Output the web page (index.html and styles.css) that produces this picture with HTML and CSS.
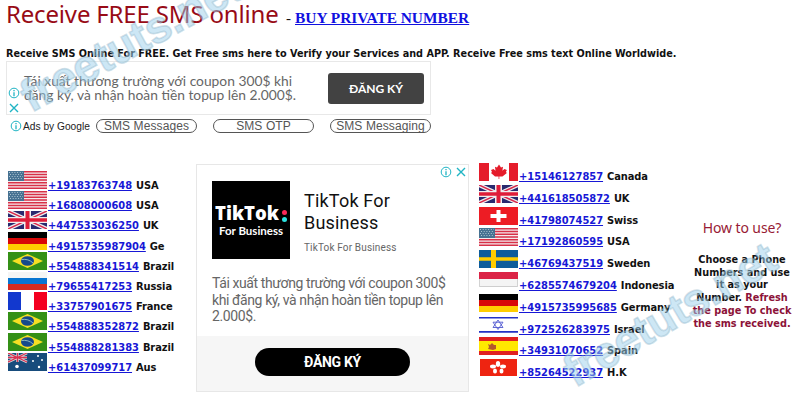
FILE: index.html
```html
<!DOCTYPE html>
<html lang="en">
<head>
<meta charset="utf-8">
<title>Receive FREE SMS online</title>
<link rel="stylesheet" href="styles.css">
</head>
<body>
<svg class="defs" width="0" height="0" aria-hidden="true">
  <defs>
    <symbol id="us" viewBox="0 0 39 18" preserveAspectRatio="none"><path fill="#f5eaec" d="M0 0h39v18H0z"/><path stroke="#d83048" stroke-width="1.5" d="M0 .7h39M0 3.5h39M0 6.3h39M0 9h39M0 11.8h39M0 14.5h39M0 17.3h39"/><path fill="#467292" d="M0 0h16v10H0z"/><path stroke="#b9ced9" stroke-width=".9" stroke-dasharray="1 1.7" d="M1 1.5h14M2 3.5h13M1 5.5h14M2 7.5h13"/></symbol>
    <symbol id="uk" viewBox="0 0 39 18" preserveAspectRatio="none"><path fill="#29296f" d="M0 0h39v18H0z"/><path stroke="#eee" stroke-width="4" d="M0 0l39 18M39 0L0 18"/><path stroke="#d9264a" stroke-width="1.5" d="M0 0l39 18M39 0L0 18"/><path stroke="#eee" stroke-width="7" d="M19.500 0v18"/><path stroke="#eee" stroke-width="6" d="M0 9h39"/><path stroke="#df1c38" stroke-width="4" d="M19.500 0v18"/><path stroke="#df1c38" stroke-width="3.500" d="M0 9h39"/></symbol>
    <symbol id="de" viewBox="0 0 39 18" preserveAspectRatio="none"><path d="M0 0h39v6H0z"/><path fill="#d80808" d="M0 6h39v6H0z"/><path fill="#ffce00" d="M0 12h39v6H0z"/></symbol>
    <symbol id="br" viewBox="0 0 39 18" preserveAspectRatio="none"><path fill="#349016" d="M0 0h39v18H0z"/><path fill="#f6df24" d="M4 9L19.500 2 35 9l-15.500 7z"/><ellipse cx="19.500" cy="9" rx="6.500" ry="4.800" fill="#164a8b"/><path d="M13.500 7.500q7-1 11.500 3.500" fill="none" stroke="#8eb9bd"/></symbol>
    <symbol id="ru" viewBox="0 0 39 18" preserveAspectRatio="none"><path fill="#f5f5f5" d="M0 0h39v6H0z"/><path fill="#0875d1" d="M0 6h39v6H0z"/><path fill="#d52b1e" d="M0 12h39v6H0z"/></symbol>
    <symbol id="fr" viewBox="0 0 39 18" preserveAspectRatio="none"><path fill="#fff" d="M0 0h39v18H0z"/><path fill="#1238ce" d="M0 0h13v18H0z"/><path fill="#f40020" d="M26 0h13v18H26z"/></symbol>
    <symbol id="au" viewBox="0 0 39 18" preserveAspectRatio="none"><path fill="#174c7c" d="M0 0h39v18H0z"/><path stroke="#ddd" stroke-width="2.500" d="M0 0l19 9M19 0L0 9M9.500 0v9M0 4.500h19"/><path stroke="#d93353" stroke-width="1.300" d="M0 0l19 9M19 0L0 9M9.500 0v9M0 4.500h19"/><g fill="#fff"><circle cx="9" cy="13.500" r="1.800"/><circle cx="30" cy="3" r="1"/><circle cx="25" cy="8" r="1"/><circle cx="34" cy="7" r="1"/><circle cx="31" cy="14" r="1.200"/></g></symbol>
    <symbol id="ca" viewBox="0 0 39 18" preserveAspectRatio="none"><path fill="#fff" d="M0 0h39v18H0z"/><path fill="#e51c2b" d="M0 0h10v18H0zM30 0h9v18h-9zM20 1.500l2 3 2-.8-.6 4 2-1.600 2.500.900-1 2 1 1-4.500 3.500H20.300V16h-.7v-2.500H16L12 10l1-1-1-2 2.500-.900 2 1.600-.5-4 2 .8z"/></symbol>
    <symbol id="ch" viewBox="0 0 39 18" preserveAspectRatio="none"><path fill="#ed1c24" d="M0 0h39v18H0z"/><path fill="#fff" d="M17.500 3h4v4h6v4h-6v4h-4v-4h-6V7h6z"/></symbol>
    <symbol id="se" viewBox="0 0 39 18" preserveAspectRatio="none"><path fill="#0e5c9b" d="M0 0h39v18H0z"/><path fill="#fc0" d="M12 0h5v18h-5zM0 7.200h39v3.600H0z"/></symbol>
    <symbol id="id" viewBox="0 0 39 18" preserveAspectRatio="none"><path fill="#f4f4f4" stroke="#bbb" stroke-width=".7" d="M.4 0h38.200v14.500H.4z"/><path fill="#db2346" d="M0 0h39v7H0z"/></symbol>
    <symbol id="il" viewBox="0 0 39 18" preserveAspectRatio="none"><path fill="#fff" d="M0 0h39v18H0z"/><path fill="#2332c5" d="M0 1h39v1.600H0zM0 15h39v1.700H0z"/><path fill="none" stroke="#5058d0" stroke-width=".9" d="M19 4l5 7.500H14zM19 13.500L14 6.200h10z"/></symbol>
    <symbol id="es" viewBox="0 0 39 18" preserveAspectRatio="none"><path fill="#e02020" d="M0 0h39v18H0z"/><path fill="#ffe800" d="M0 4h39v10H0z"/><path fill="#b3582c" d="M9 7l2 1 2-2 2 2 2 0v4l-3 1-5-1 1-2z"/></symbol>
    <symbol id="hk" viewBox="0 0 39 18" preserveAspectRatio="none"><path fill="#ee2411" d="M1 0h37v17H1z"/><g fill="#fff"><ellipse cx="19" cy="5" rx="2.200" ry="3"/><ellipse cx="24" cy="7.500" rx="3" ry="1.900"/><ellipse cx="22.500" cy="12" rx="2" ry="2.600"/><ellipse cx="16" cy="12" rx="2" ry="2.600"/><ellipse cx="14" cy="7.500" rx="3" ry="1.900"/></g><circle cx="19" cy="8.700" r="1" fill="#ee2411"/></symbol>
    <symbol id="info" viewBox="0 0 12 12"><circle cx="6" cy="6" r="4.800" fill="none" stroke="#20b4c4"/><path stroke="#20b4c4" stroke-width="1.300" d="M6 3v1.300M6 5.300v4"/></symbol>
    <symbol id="close" viewBox="0 0 12 12"><path stroke="#20b4c4" stroke-width="1.400" d="M2 2l8 8M10 2l-8 8"/></symbol>
  </defs>
</svg>
<main class="page">
  <header class="heading"><h1>Receive FREE SMS online</h1><span class="dash">-</span><a class="buy" href="#">BUY PRIVATE NUMBER</a></header>
  <p class="intro">Receive SMS Online For FREE. Get Free sms here to Verify your Services and APP. Receive Free sms text Online Worldwide.</p>
  <section class="banner">
    <div class="banner-icons"><svg><use href="#info"/></svg><svg><use href="#close"/></svg></div>
    <p>Tái xuất thương trường với coupon 300$ khi<br>đăng ký, và nhận hoàn tiền topup lên 2.000$.</p>
    <a class="banner-button">ĐĂNG KÝ</a>
  </section>
  <nav class="ads"><svg><use href="#info"/></svg><span class="by">Ads by Google</span><a>SMS Messages</a><a>SMS OTP</a><a>SMS Messaging</a></nav>
  <div class="columns">
    <ul class="numbers left">
      <li><svg><use href="#us"/></svg><a href="#">+19183763748</a><b>USA</b></li>
      <li><svg><use href="#us"/></svg><a href="#">+16808000608</a><b>USA</b></li>
      <li><svg><use href="#uk"/></svg><a href="#">+447533036250</a><b>UK</b></li>
      <li><svg><use href="#de"/></svg><a href="#">+4915735987904</a><b>Ge</b></li>
      <li><svg><use href="#br"/></svg><a href="#">+554888341514</a><b>Brazil</b></li>
      <li><svg><use href="#ru"/></svg><a href="#">+79655417253</a><b>Russia</b></li>
      <li><svg><use href="#fr"/></svg><a href="#">+33757901675</a><b>France</b></li>
      <li><svg><use href="#br"/></svg><a href="#">+554888352872</a><b>Brazil</b></li>
      <li><svg><use href="#br"/></svg><a href="#">+554888281383</a><b>Brazil</b></li>
      <li><svg><use href="#au"/></svg><a href="#">+61437099717</a><b>Aus</b></li>
    </ul>
    <section class="card">
      <div class="card-icons"><svg><use href="#info"/></svg><svg><use href="#close"/></svg></div>
      <div class="card-head">
        <div class="logo"><strong>TikTok<i></i></strong><span>For Business</span></div>
        <div><h2>TikTok For<br>Business</h2><small>TikTok For Business</small></div>
      </div>
      <p>Tái xuất thương trường với coupon 300$<br>khi đăng ký, và nhận hoàn tiền topup lên<br>2.000$.</p>
      <footer><a>ĐĂNG KÝ</a></footer>
    </section>
    <ul class="numbers right">
      <li><svg><use href="#ca"/></svg><a href="#">+15146127857</a><b>Canada</b></li>
      <li><svg><use href="#uk"/></svg><a href="#">+441618505872</a><b>UK</b></li>
      <li><svg><use href="#ch"/></svg><a href="#">+41798074527</a><b>Swiss</b></li>
      <li><svg><use href="#us"/></svg><a href="#">+17192860595</a><b>USA</b></li>
      <li><svg><use href="#se"/></svg><a href="#">+46769437519</a><b>Sweden</b></li>
      <li><svg><use href="#id"/></svg><a href="#">+6285574679204</a><b>Indonesia</b></li>
      <li><svg><use href="#de"/></svg><a href="#">+4915735995685</a><b>Germany</b></li>
      <li><svg><use href="#il"/></svg><a href="#">+972526283975</a><b>Israel</b></li>
      <li><svg><use href="#es"/></svg><a href="#">+34931070652</a><b>Spain</b></li>
      <li><svg><use href="#hk"/></svg><a href="#">+85264522937</a><b>H.K</b></li>
    </ul>
    <aside class="how"><h3>How to use?</h3><p>Choose a Phone<br>Numbers and use<br>it as your<br>Number. <em>Refresh<br>the page To check<br>the sms received.</em></p></aside>
  </div>
</main>
<svg class="watermark" viewBox="0 0 800 400" aria-hidden="true">
  <text transform="translate(31 113) rotate(-28.5)" textLength="244">freetuts.net</text>
  <text transform="translate(575 388) rotate(-30.5)" textLength="238">freetuts.net</text>
</svg>
</body>
</html>
```

FILE: styles.css
```css
* { box-sizing: border-box; }
body { margin: 0; width: 800px; height: 400px; overflow: hidden; background: #fff; color: #111; font-family: "Noto Sans", sans-serif; }
h1, h2, h3, p, ul { margin: 0; padding: 0; font-weight: normal; }
a { text-decoration: none; }
.defs { position: absolute; }
.page { height: 400px; padding-left: 6px; }
.heading { display: flex; align-items: baseline; height: 45px; white-space: nowrap; }
h1 { width: 280px; font-size: 24px; line-height: 27px; color: #980b16; letter-spacing: -.17px; }
.dash { width: 9px; font: 15px "Liberation Serif", serif; }
.buy { font: bold 15.4px "Liberation Serif", serif; color: #1010e0; text-decoration: underline; }
.intro { height: 16px; font-family: "DejaVu Sans Condensed", "DejaVu Sans", sans-serif; font-stretch: condensed; font-size: 10.760px; font-weight: bold; line-height: 17px; white-space: nowrap; }
.banner { display: flex; width: 425px; height: 54px; border: 1px solid #e8e8e8; color: #666; }
.banner-icons { width: 17px; padding: 25px 0 0 1px; }
.banner-icons svg { display: block; width: 12px; height: 12px; margin-bottom: 3px; }
.banner p { width: 304px; padding-top: 12px; font: 13.800px/14px Lato, sans-serif; white-space: nowrap; }
.banner-button { width: 96px; height: 31px; margin-top: 11px; border-radius: 3px; background: #424242; color: #fff; font: bold 12px/31px Lato, sans-serif; text-align: center; }
.ads { display: flex; height: 21px; padding: 4px 0 0 4px; font-family: "Liberation Sans", sans-serif; }
.ads svg { width: 12px; height: 12px; margin-top: 1px; }
.by { width: 73px; margin-left: 1px; font-size: 10.200px; line-height: 16px; color: #222; white-space: nowrap; }
.ads a { width: 101px; height: 14px; margin-right: 16px; border: 1px solid #555; border-radius: 7px; color: #555; font-size: 12px; line-height: 12px; letter-spacing: .1px; text-align: center; white-space: nowrap; }
.columns { display: flex; align-items: flex-start; padding-top: 27px; }
.numbers { list-style: none; font-family: "DejaVu Sans Condensed", "DejaVu Sans", sans-serif; font-stretch: condensed; font-size: 11px; font-weight: bold; }
.numbers li { display: flex; align-items: flex-start; white-space: nowrap; }
.numbers svg { width: 39px; height: 18px; flex: none; }
.numbers a { margin: 8px 4px 0 1px; line-height: 14px; color: #1717d6; text-decoration: underline; text-underline-offset: 1px; }
.numbers b { margin-top: 8px; line-height: 14px; letter-spacing: -.1px; }
.left { width: 190px; padding: 8px 0 0 2px; }
.left li { height: 20.2px; }
.right { width: 217px; padding-left: 10px; }
.right li { height: 21.8px; }
.right a, .right b { margin-top: 7px; }
.card { position: relative; width: 273px; height: 228px; margin-top: 1px; border: 1px solid #e7e7e7; font-family: Roboto, sans-serif; }
.card-icons { position: absolute; top: 1px; right: 1px; display: flex; gap: 3px; }
.card-icons svg { width: 12px; height: 12px; }
.card-head { display: flex; height: 110px; padding: 16px 0 0 15px; }
.logo { width: 78px; height: 78px; margin-right: 14px; padding-top: 20px; background: #000; color: #fff; font-family: "Open Sans", sans-serif; font-weight: bold; text-align: center; white-space: nowrap; }
.logo strong { display: flex; justify-content: center; gap: 3px; font-size: 18.500px; line-height: 23px; }
.logo i { width: 5px; height: 5px; margin-top: 9px; border-radius: 50%; background: #fb2858; box-shadow: 0 7px #2de1df; }
.logo span { display: block; font-family: Lato, sans-serif; font-size: 11.500px; line-height: 13px; }
.card h2 { margin-top: 9px; color: #111; font-size: 18px; line-height: 22px; letter-spacing: .2px; }
.card small { display: block; margin-top: 6px; color: #666; font-size: 10px; line-height: 15px; letter-spacing: .15px; }
.card p { height: 61px; padding: 0 0 0 15px; color: #666; font-size: 14px; line-height: 16.500px; white-space: nowrap; letter-spacing: -.4px; }
.card footer { height: 55px; padding: 12px 0 0 58px; background: #f6f6f6; }
.card footer a { display: block; width: 155px; height: 28px; border-radius: 14px; background: #000; color: #fff; font-size: 14px; font-weight: bold; letter-spacing: -.3px; line-height: 28px; text-align: center; }
.how { width: 112px; padding-top: 55px; text-align: center; white-space: nowrap; }
.how h3 { color: #981b35; font-size: 14px; line-height: 20px; letter-spacing: -.1px; }
.how p { margin-top: 16px; font-family: "DejaVu Sans Condensed", "DejaVu Sans", sans-serif; font-stretch: condensed; font-size: 10.800px; font-weight: bold; line-height: 12.700px; }
.how em { color: #8c1238; font-style: normal; }
.watermark { position: absolute; top: 0; left: 0; width: 800px; height: 400px; pointer-events: none; }
.watermark text { font: bold 45px "Liberation Sans", sans-serif; fill: #9bd0eb; fill-opacity: .5; stroke: #8fb4c8; stroke-width: 1.6; stroke-opacity: .4; }
```
